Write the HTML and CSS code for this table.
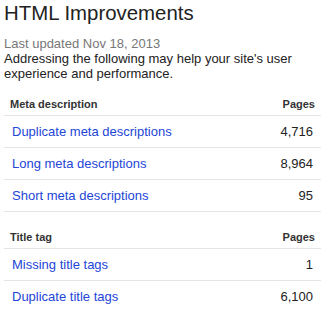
FILE: index.html
```html
<!DOCTYPE html>
<html>
<head>
<meta charset="utf-8">
<link rel="stylesheet" href="styles.css">
</head>
<body>
<div class="page">
  <h1 class="title">HTML Improvements</h1>
  <div class="updated">Last updated Nov 18, 2013</div>
  <p class="intro">Addressing the following may help your site's user experience and performance.</p>

  <table class="issues first">
    <thead>
      <tr><th class="name">Meta description</th><th class="count">Pages</th></tr>
    </thead>
    <tbody>
      <tr><td class="name"><a href="#">Duplicate meta descriptions</a></td><td class="count">4,716</td></tr>
      <tr><td class="name"><a href="#">Long meta descriptions</a></td><td class="count">8,964</td></tr>
      <tr><td class="name"><a href="#">Short meta descriptions</a></td><td class="count">95</td></tr>
    </tbody>
  </table>

  <table class="issues second">
    <thead>
      <tr><th class="name">Title tag</th><th class="count">Pages</th></tr>
    </thead>
    <tbody>
      <tr><td class="name"><a href="#">Missing title tags</a></td><td class="count">1</td></tr>
      <tr><td class="name"><a href="#">Duplicate title tags</a></td><td class="count">6,100</td></tr>
    </tbody>
  </table>
</div>
</body>
</html>
```

FILE: styles.css
```css
html, body {
  margin: 0;
  padding: 0;
  background: #ffffff;
}
body {
  font-family: "Liberation Sans", Arial, sans-serif;
  color: #222222;
}
.page {
  width: 317px;
  padding: 0 4px;
}
.title {
  margin: 0;
  padding-top: 1px;
  font-size: 20.4px;
  font-weight: normal;
  line-height: 24px;
  color: #222222;
}
.updated {
  margin-top: 11px;
  font-size: 13px;
  line-height: 15px;
  color: #777777;
}
.intro {
  margin: 0;
  font-size: 13px;
  line-height: 15px;
  color: #222222;
}
.issues {
  width: 100%;
  border-collapse: collapse;
  font-size: 13px;
}
.issues.first {
  margin-top: 8px;
}
.issues.second {
  margin-top: 10px;
}
.issues th {
  font-size: 11px;
  font-weight: bold;
  color: #333333;
  height: 22px;
  padding: 0 6px 4px 6px;
  vertical-align: bottom;
  line-height: 13px;
  border-bottom: 1px solid #e5e5e5;
}
.issues th.name {
  text-align: left;
}
.issues th.count {
  text-align: right;
}
.issues td {
  height: 31px;
  padding: 0 8px;
  vertical-align: middle;
  border-bottom: 1px solid #e5e5e5;
}
.issues td.count {
  text-align: right;
  color: #222222;
}
.issues a {
  color: #2346d7;
  text-decoration: none;
}
```
